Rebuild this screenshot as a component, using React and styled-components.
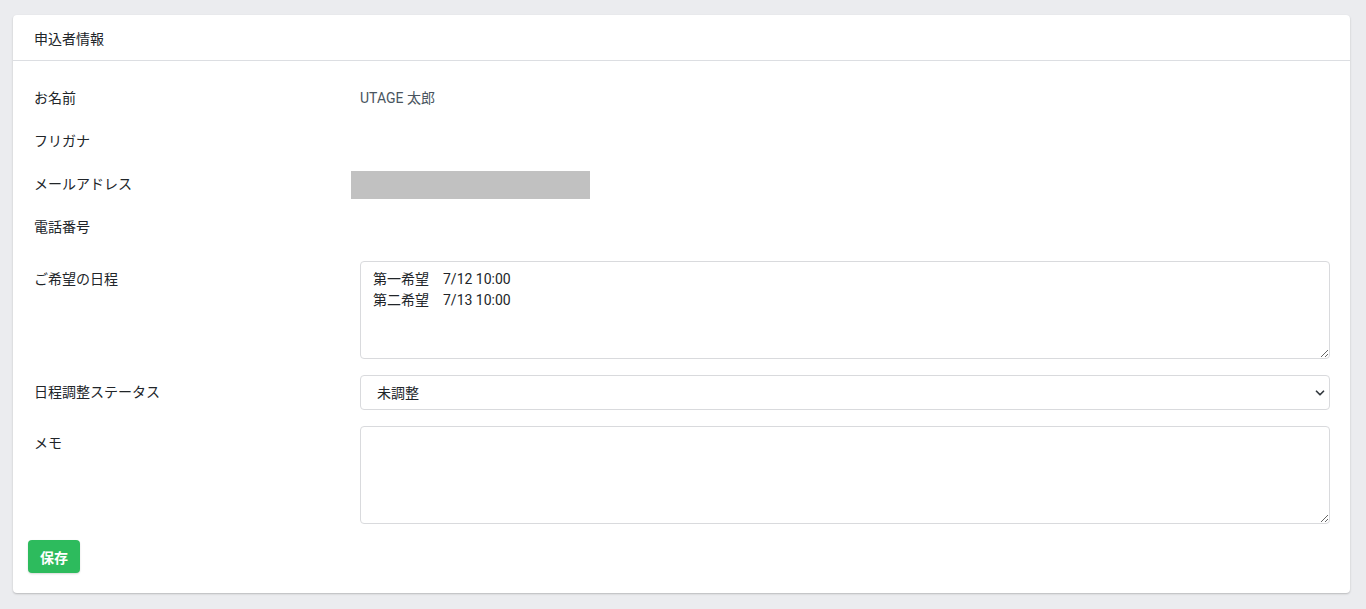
import React, { useState } from "react";
import styled, { createGlobalStyle } from "styled-components";
import { ChevronDown } from "lucide-react";

const GlobalStyle = createGlobalStyle`
  html, body {
    margin: 0;
    padding: 0;
    background: #ebecef;
    font-family: Roboto, "Noto Sans CJK JP", sans-serif;
    font-size: 14px;
    color: #212529;
  }
  * { box-sizing: border-box; }
`;

const Page = styled.div`
  padding: 15px 16px 16px 13px;
`;

const Card = styled.div`
  background: #fff;
  border-radius: 4px;
  box-shadow: 0 1px 2px rgba(0, 0, 0, 0.22);
`;

const CardHeader = styled.div`
  height: 46px;
  padding: 0 21px;
  display: flex;
  align-items: center;
  border-bottom: 1px solid #dcdee2;
  font-size: 14px;
  color: #212529;
`;

const CardBody = styled.div`
  padding: 16px 20px 20px 21px;
`;

const Row = styled.div`
  display: grid;
  grid-template-columns: 326px 1fr;
  align-items: ${(p) => (p.top ? "start" : "center")};
  min-height: ${(p) => (p.tall ? "43px" : "auto")};
  margin-bottom: ${(p) => p.gap || 0}px;
`;

const Label = styled.div`
  line-height: 21px;
  padding-top: ${(p) => p.pt || 0}px;
  color: #212529;
`;

const Value = styled.div`
  line-height: 21px;
  color: #4a5560;
`;

const Masked = styled.div`
  width: 239px;
  height: 28px;
  margin-left: -9px;
  background: #c1c1c1;
`;

const TextArea = styled.textarea`
  display: block;
  width: 100%;
  height: 98px;
  padding: 7px 12px;
  border: 1px solid #d9dadd;
  border-radius: 4px;
  font-family: inherit;
  font-size: 14px;
  line-height: 21px;
  color: #212529;
  background: #fff;
  outline: none;
`;

const SelectWrap = styled.div`
  position: relative;
`;

const Select = styled.select`
  display: block;
  width: 100%;
  height: 35px;
  padding: 0 36px 0 16px;
  border: 1px solid #d9dadd;
  border-radius: 4px;
  font-family: inherit;
  font-size: 14px;
  color: #212529;
  background: #fff;
  appearance: none;
  outline: none;
`;

const Chevron = styled(ChevronDown)`
  position: absolute;
  right: 3px;
  top: 11px;
  pointer-events: none;
  color: #343a40;
`;

const SaveButton = styled.button`
  margin-left: -6px;
  width: 52px;
  height: 33px;
  border: none;
  border-radius: 4px;
  background: #2dbb5d;
  color: #fff;
  font-family: inherit;
  font-size: 14px;
  font-weight: 700;
  box-shadow: 0 1px 2px rgba(0, 0, 0, 0.15);
  cursor: pointer;
`;

export default function App() {
  const [wish, setWish] = useState("第一希望　7/12 10:00\n第二希望　7/13 10:00");
  const [status, setStatus] = useState("未調整");
  const [memo, setMemo] = useState("");

  return (
    <Page>
      <GlobalStyle />
      <Card>
        <CardHeader>申込者情報</CardHeader>
        <CardBody>
          <Row tall>
            <Label>お名前</Label>
            <Value>UTAGE 太郎</Value>
          </Row>
          <Row tall>
            <Label>フリガナ</Label>
            <Value />
          </Row>
          <Row tall>
            <Label>メールアドレス</Label>
            <Masked />
          </Row>
          <Row tall gap={12}>
            <Label>電話番号</Label>
            <Value />
          </Row>
          <Row top gap={16}>
            <Label pt={8}>ご希望の日程</Label>
            <TextArea value={wish} onChange={(e) => setWish(e.target.value)} />
          </Row>
          <Row gap={16}>
            <Label>日程調整ステータス</Label>
            <SelectWrap>
              <Select value={status} onChange={(e) => setStatus(e.target.value)}>
                <option>未調整</option>
                <option>調整済み</option>
              </Select>
              <Chevron size={14} strokeWidth={3} />
            </SelectWrap>
          </Row>
          <Row top gap={16}>
            <Label pt={7}>メモ</Label>
            <TextArea value={memo} onChange={(e) => setMemo(e.target.value)} />
          </Row>
          <SaveButton>保存</SaveButton>
        </CardBody>
      </Card>
    </Page>
  );
}
